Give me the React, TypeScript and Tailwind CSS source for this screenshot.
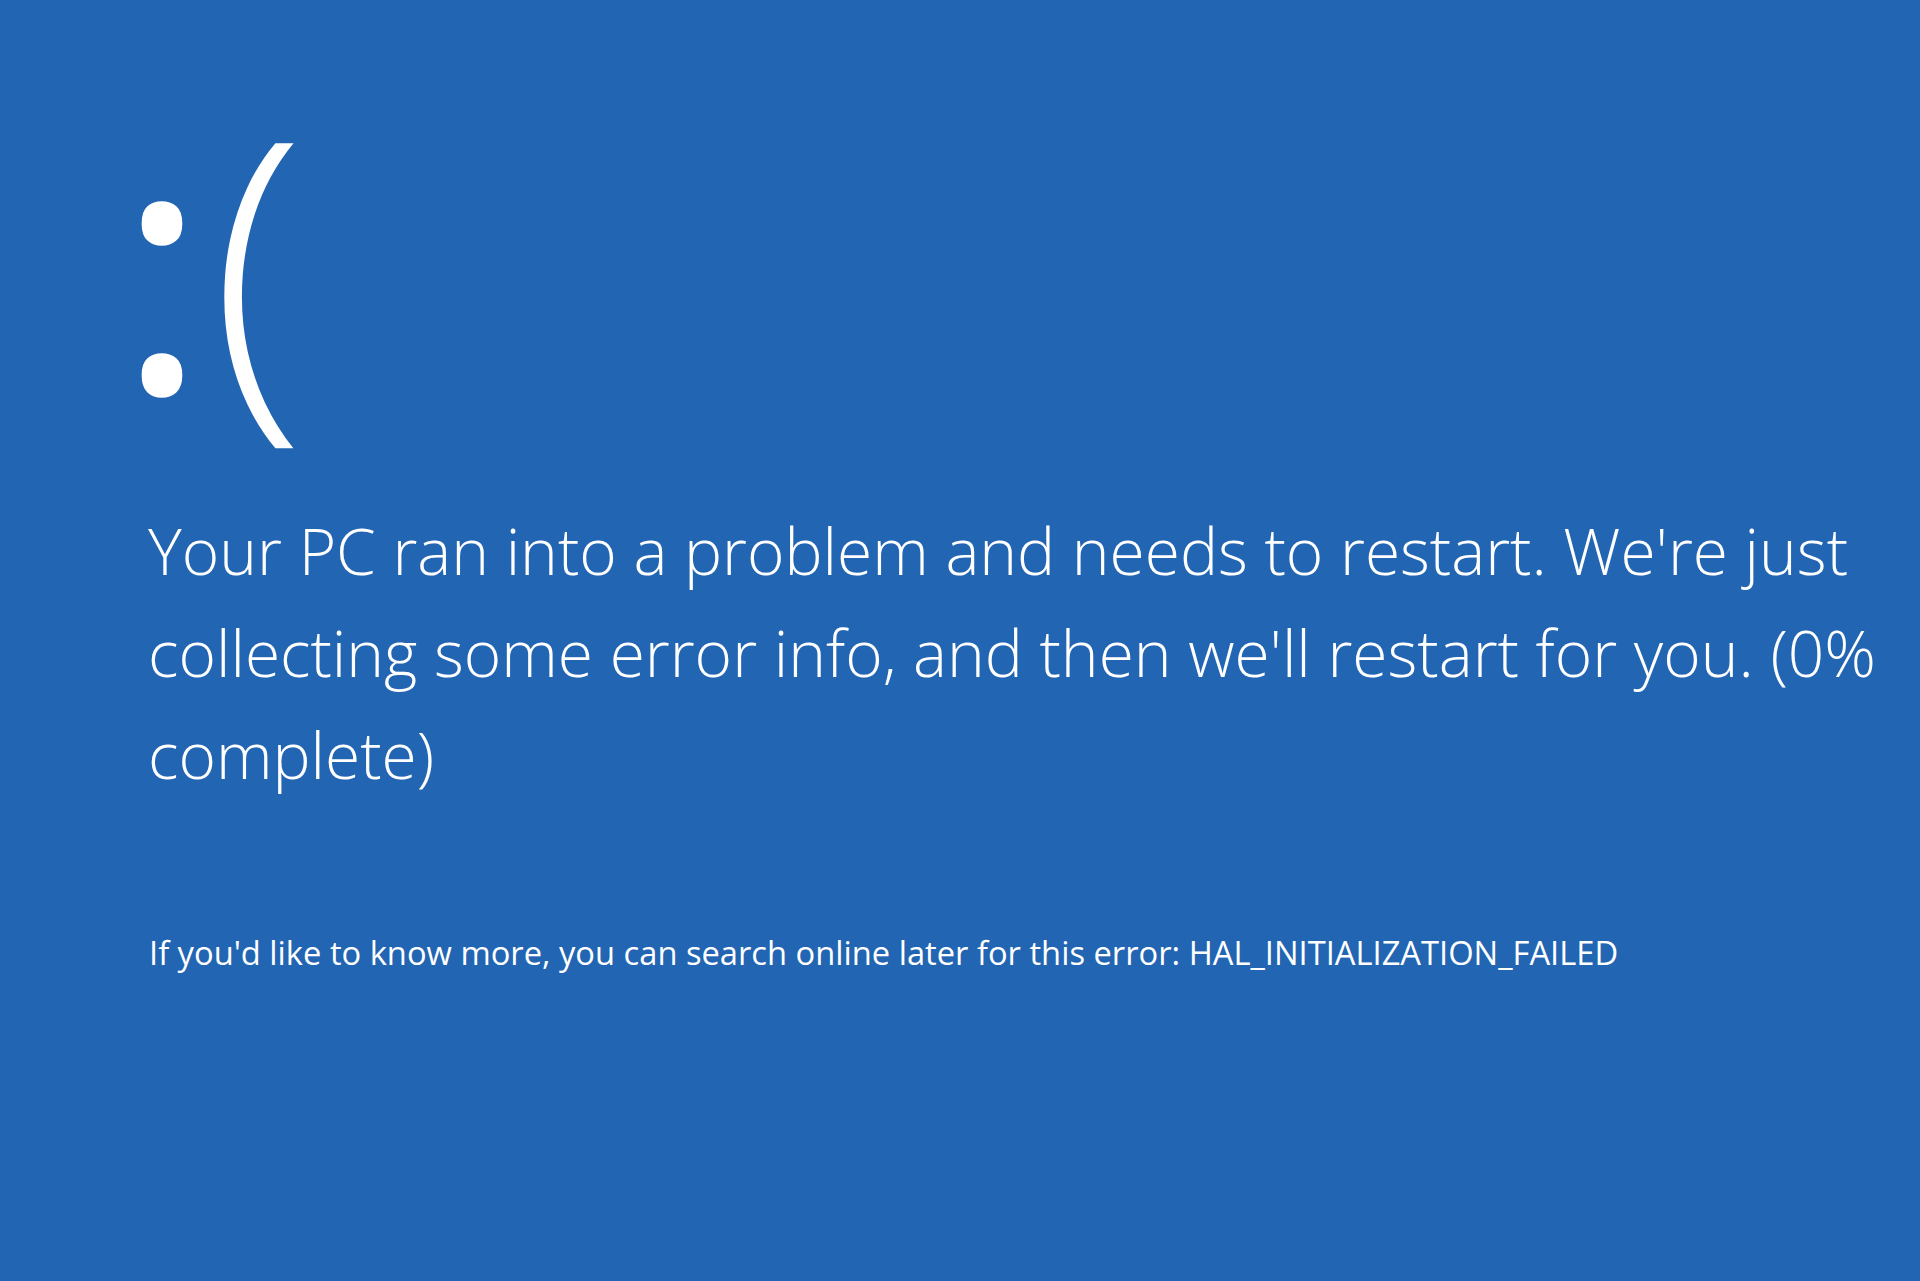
export default function App() {
  return (
    <div className="min-h-[1281px] w-full overflow-hidden bg-[#2265b3] text-white font-['Open_Sans',sans-serif]">
      <div className="pl-[140px] pt-[83px]">
        {/* Sad face */}
        <div className="-ml-[24px] flex h-[417px] items-start text-[350px] leading-none whitespace-nowrap">
          <span className="font-normal">:</span>
          <span className="ml-[2px] font-light">(</span>
        </div>

        {/* Main message */}
        <p className="text-[64px] font-light leading-[102px] whitespace-nowrap pl-[8px]">
          Your PC ran into a problem and needs to restart. We're just
          <br />
          collecting some error info, and then we'll restart for you. (0%
          <br />
          complete)
        </p>

        {/* Stop code hint */}
        <p className="mt-[127px] pl-[9px] text-[32.7px] leading-[40px] whitespace-nowrap">
          If you'd like to know more, you can search online later for this error: HAL_INITIALIZATION_FAILED
        </p>
      </div>
    </div>
  );
}
